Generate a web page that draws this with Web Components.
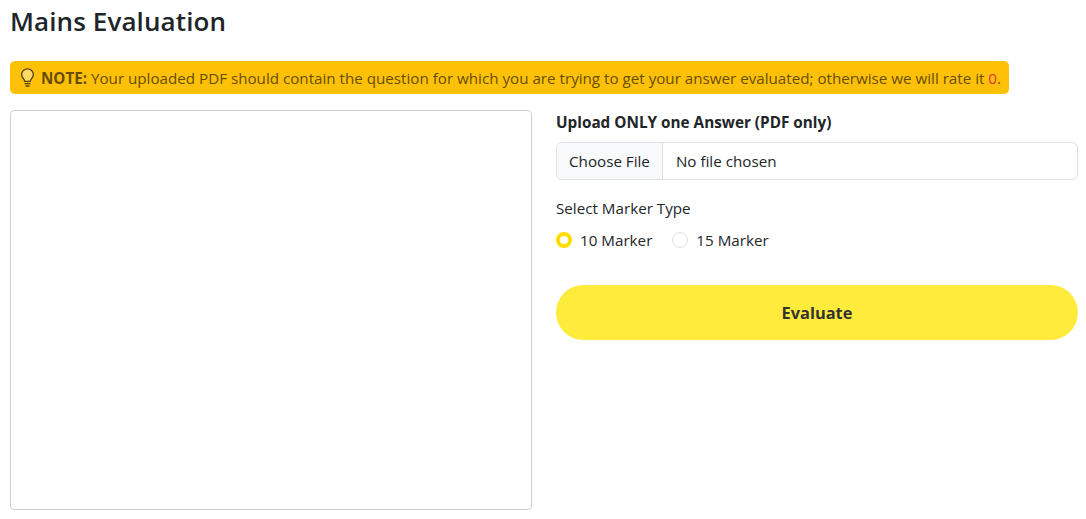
<!DOCTYPE html>
<html>
<head>
<meta charset="utf-8">
<title>Mains Evaluation</title>
<style>
  html, body { margin: 0; background: #fff; }
  body { font-family: "Open Sans", "Noto Sans", sans-serif; color: #212529; overflow: hidden; }
</style>
</head>
<body>
<mains-page>
  <page-title slot="title">Mains Evaluation</page-title>
  <note-bar slot="note"><b>NOTE:</b> Your uploaded PDF should contain the question for which you are trying to get your answer evaluated; otherwise we will rate it <em>0</em>.</note-bar>
  <pdf-pane slot="pane"></pdf-pane>
  <upload-field slot="form" label="Upload ONLY one Answer (PDF only)"></upload-field>
  <marker-group slot="form" label="Select Marker Type">
    <marker-radio checked>10 Marker</marker-radio>
    <marker-radio>15 Marker</marker-radio>
  </marker-group>
  <eval-button slot="form">Evaluate</eval-button>
</mains-page>

<script>
class MainsPage extends HTMLElement {
  constructor() {
    super();
    this.attachShadow({ mode: "open" });
    this.shadowRoot.innerHTML = `
    <style>
      :host { display: block; height: 519px; box-sizing: border-box; padding: 0 8px 0 10px; }
      .cols { display: grid; grid-template-columns: 522px 522px; column-gap: 24px; margin-top: 16px; }
      .form { display: flex; flex-direction: column; }
    </style>
    <slot name="title"></slot>
    <slot name="note"></slot>
    <div class="cols">
      <slot name="pane"></slot>
      <div class="form"><slot name="form"></slot></div>
    </div>`;
  }
}

class PageTitle extends HTMLElement {
  constructor() {
    super();
    this.attachShadow({ mode: "open" });
    this.shadowRoot.innerHTML = `
    <style>
      :host { display: block; height: 61px; box-sizing: border-box; padding-top: 4px;
        font-size: 26px; line-height: 34px; font-weight: 600; color: #212529; letter-spacing: 0.1px; }
    </style>
    <slot></slot>`;
  }
}

class NoteBar extends HTMLElement {
  constructor() {
    super();
    this.attachShadow({ mode: "open" });
    this.shadowRoot.innerHTML = `
    <style>
      :host { display: flex; align-items: center; width: 999px; height: 33px; box-sizing: border-box;
        padding-left: 10px; background: #ffc107; border-radius: 5px; color: #664d03;
        font-size: 15.18px; white-space: nowrap; }
      svg { flex: none; margin-right: 6px; }
      ::slotted(b) { font-weight: 700; }
      ::slotted(em) { font-style: normal; color: #dc3545; }
    </style>
    <svg width="15" height="19" viewBox="0 0 15 19" fill="#ffd866" stroke="#524008" stroke-width="1.3" stroke-linecap="round" stroke-linejoin="round">
      <path d="M4.8 13.4c0-2.2-3.2-3.8-3.2-7A5.9 5.9 0 0 1 7.5 .8a5.9 5.9 0 0 1 5.9 5.6c0 3.2-3.2 4.8-3.2 7z"/>
      <path d="M5 15.6h5M6 18h3"/>
    </svg>
    <span><slot></slot></span>`;
  }
}

class PdfPane extends HTMLElement {
  constructor() {
    super();
    this.attachShadow({ mode: "open" });
    this.shadowRoot.innerHTML = `
    <style>
      :host { display: block; height: 400px; box-sizing: border-box; background: #fff;
        border: 1px solid #ced0d6; border-radius: 4px; }
    </style>`;
  }
}

class UploadField extends HTMLElement {
  constructor() {
    super();
    this.attachShadow({ mode: "open" });
    this.shadowRoot.innerHTML = `
    <style>
      :host { display: block; padding-top: 2px; font-size: 15.2px; }
      .label { font-weight: 700; line-height: 20px; margin-bottom: 10px; font-size: 15.3px; }
      .file { display: flex; height: 38px; box-sizing: border-box; border: 1px solid #dee2e6;
        border-radius: 6px; overflow: hidden; line-height: 36px; }
      .btn { background: #f8f9fa; border-right: 1px solid #dee2e6; padding: 0 12px; }
      .name { padding-left: 13px; }
    </style>
    <div class="label"></div>
    <div class="file"><div class="btn">Choose File</div><div class="name">No file chosen</div></div>`;
  }
  connectedCallback() {
    this.shadowRoot.querySelector(".label").textContent = this.getAttribute("label");
  }
}

class MarkerGroup extends HTMLElement {
  constructor() {
    super();
    this.attachShadow({ mode: "open" });
    this.shadowRoot.innerHTML = `
    <style>
      :host { display: block; margin-top: 17px; font-size: 15.2px; }
      .label { line-height: 22px; margin-bottom: 10px; }
      .row { display: flex; gap: 20px; }
    </style>
    <div class="label"></div>
    <div class="row"><slot></slot></div>`;
  }
  connectedCallback() {
    this.shadowRoot.querySelector(".label").textContent = this.getAttribute("label");
  }
}

class MarkerRadio extends HTMLElement {
  constructor() {
    super();
    this.attachShadow({ mode: "open" });
    this.shadowRoot.innerHTML = `
    <style>
      :host { display: flex; align-items: center; gap: 8px; line-height: 22px; }
      .dot { width: 16px; height: 16px; box-sizing: border-box; border-radius: 50%;
        border: 1px solid #dee2e6; background: #fff; }
      :host([checked]) .dot { border: 4px solid #ffdd00; }
    </style>
    <span class="dot"></span><span><slot></slot></span>`;
  }
}

class EvalButton extends HTMLElement {
  constructor() {
    super();
    this.attachShadow({ mode: "open" });
    this.shadowRoot.innerHTML = `
    <style>
      :host { display: flex; align-items: center; justify-content: center; height: 55px;
        margin-top: 34px; background: #ffeb3b; border-radius: 28px; color: #333;
        font-size: 16.4px; font-weight: 700; }
    </style>
    <slot></slot>`;
  }
}

customElements.define("mains-page", MainsPage);
customElements.define("page-title", PageTitle);
customElements.define("note-bar", NoteBar);
customElements.define("pdf-pane", PdfPane);
customElements.define("upload-field", UploadField);
customElements.define("marker-group", MarkerGroup);
customElements.define("marker-radio", MarkerRadio);
customElements.define("eval-button", EvalButton);
</script>
</body>
</html>
